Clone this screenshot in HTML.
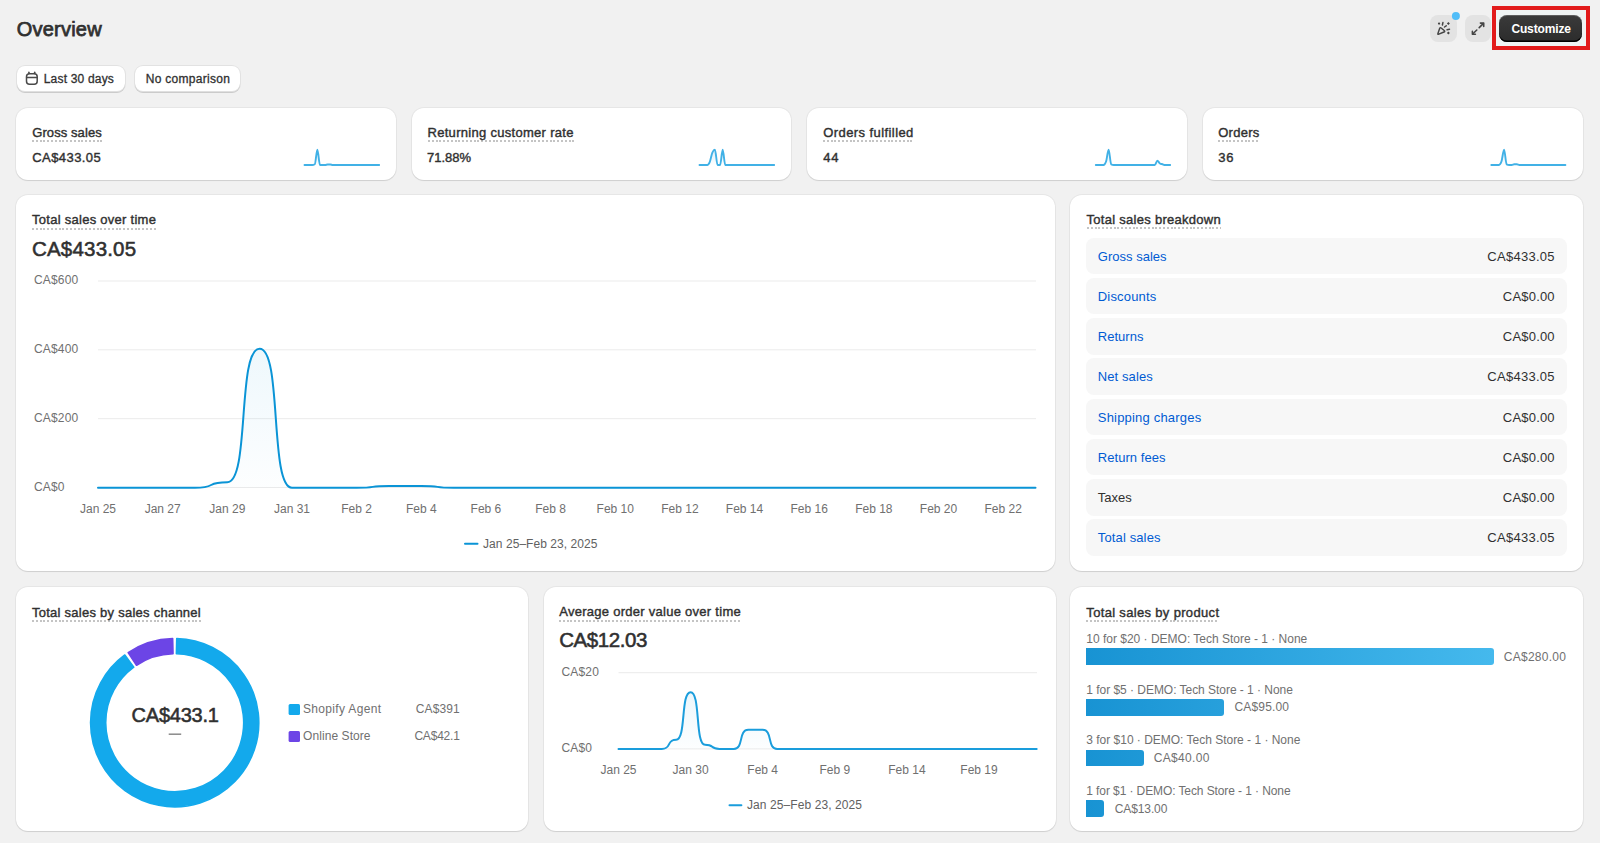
<!DOCTYPE html>
<html><head><meta charset="utf-8"><title>Overview</title>
<style>
html,body{margin:0;padding:0;}
body{width:1600px;height:843px;overflow:hidden;background:#f1f1f1;position:relative;font-family:"Liberation Sans",sans-serif;}
.t{position:absolute;line-height:1;white-space:nowrap;}
.card{position:absolute;background:#fff;border-radius:12px;box-shadow:0 0 0 1px rgba(0,0,0,0.045),0 1px 1px 0 rgba(0,0,0,0.10);}
.btn{position:absolute;background:#fff;border-radius:8px;box-shadow:0 1px 0 0 rgba(0,0,0,0.10),inset 0 -1px 0 0 rgba(0,0,0,0.12),0 0 0 1px rgba(0,0,0,0.06);}
.ibtn{position:absolute;background:#e3e3e3;border-radius:8px;}
.ul{position:absolute;height:2px;background:repeating-linear-gradient(90deg,#c4c4c4 0 2px,transparent 2px 3.8px);}
.row{position:absolute;left:1086px;width:481px;height:36.5px;background:#f7f7f7;border-radius:8px;}
.bar{position:absolute;left:1086px;height:16.5px;border-radius:0 3px 3px 0;background:linear-gradient(90deg,#1893d3 0,#45b9ed 408px);background-size:408px 100%;}
svg{position:absolute;left:0;top:0;}
</style></head><body>
<div class="card" style="left:16px;top:108px;width:380px;height:72.30000000000001px"></div><div class="card" style="left:411.5px;top:108px;width:379.5px;height:72.30000000000001px"></div><div class="card" style="left:807px;top:108px;width:379.79999999999995px;height:72.30000000000001px"></div><div class="card" style="left:1202.6px;top:108px;width:380.0px;height:72.30000000000001px"></div><div class="card" style="left:16px;top:194.5px;width:1039.3px;height:376.9px"></div><div class="card" style="left:1069.8px;top:194.5px;width:512.8px;height:376.9px"></div><div class="card" style="left:16px;top:586.8px;width:512.3px;height:244.70000000000005px"></div><div class="card" style="left:544px;top:586.8px;width:512.2px;height:244.70000000000005px"></div><div class="card" style="left:1069.8px;top:586.8px;width:512.8px;height:244.70000000000005px"></div>
<div class="btn" style="left:16.5px;top:66.2px;width:108.7px;height:25.6px"></div>
<div class="btn" style="left:134.5px;top:66.2px;width:105.9px;height:25.6px"></div>
<div class="ibtn" style="left:1430.4px;top:15px;width:26.5px;height:26.8px"></div>
<div class="ibtn" style="left:1465px;top:15px;width:25.8px;height:26.8px"></div>
<div style="position:absolute;left:1491.8px;top:6.1px;width:90.3px;height:35.5px;border:4px solid #e21b1b;background:#eff3f3"></div>
<div style="position:absolute;left:1499px;top:14.7px;width:83.4px;height:27.3px;border-radius:8px;background:linear-gradient(#3a3a3a,#2c2c2c);box-shadow:inset 0 1px 0 0 rgba(255,255,255,0.18),inset 0 -1.5px 0 0 #000"></div>
<div class="row" style="top:237.50px"></div><div class="row" style="top:277.75px"></div><div class="row" style="top:318.00px"></div><div class="row" style="top:358.25px"></div><div class="row" style="top:398.50px"></div><div class="row" style="top:438.75px"></div><div class="row" style="top:479.00px"></div><div class="row" style="top:519.25px"></div>
<div class="bar" style="top:648.25px;width:407.70px"></div><div class="bar" style="top:699.25px;width:138.30px"></div><div class="bar" style="top:749.80px;width:58.00px"></div><div class="bar" style="top:800.40px;width:18.20px"></div>
<div class="ul" style="left:32.25px;top:140.05px;width:69.50px"></div><div class="ul" style="left:427.50px;top:140.05px;width:146.25px"></div><div class="ul" style="left:823.25px;top:140.05px;width:90.50px"></div><div class="ul" style="left:1218.25px;top:140.05px;width:41.25px"></div><div class="ul" style="left:32.00px;top:227.55px;width:124.25px"></div><div class="ul" style="left:1086.50px;top:227.10px;width:134.50px"></div><div class="ul" style="left:32.00px;top:619.80px;width:169.00px"></div><div class="ul" style="left:559.20px;top:619.70px;width:181.80px"></div><div class="ul" style="left:1086.30px;top:619.80px;width:133.00px"></div>
<svg width="1600" height="843" viewBox="0 0 1600 843">
<defs>
<linearGradient id="sg" x1="0" y1="0" x2="0" y2="1"><stop offset="0" stop-color="#3aaee3" stop-opacity="0.18"/><stop offset="1" stop-color="#3aaee3" stop-opacity="0"/></linearGradient>
<linearGradient id="mg" gradientUnits="userSpaceOnUse" x1="0" y1="347" x2="0" y2="488"><stop offset="0" stop-color="#0a94d6" stop-opacity="0.07"/><stop offset="1" stop-color="#0a94d6" stop-opacity="0.01"/></linearGradient>
<linearGradient id="ag" gradientUnits="userSpaceOnUse" x1="0" y1="692" x2="0" y2="749"><stop offset="0" stop-color="#0a94d6" stop-opacity="0.08"/><stop offset="1" stop-color="#0a94d6" stop-opacity="0.01"/></linearGradient>
</defs>
<path d="M304.50,165.00C305.36,165.00 306.22,165.00 307.08,165.00C307.93,165.00 308.79,165.00 309.65,165.00C310.51,165.00 311.37,165.00 312.23,165.00C313.09,165.00 313.94,164.74 314.80,164.23C315.66,163.72 316.52,149.60 317.38,149.60C318.24,149.60 319.10,165.00 319.96,165.00C320.81,165.00 321.67,165.00 322.53,165.00C323.39,165.00 324.25,165.00 325.11,165.00C325.97,165.00 326.82,164.54 327.68,164.54C328.54,164.54 329.40,164.54 330.26,164.54C331.12,164.54 331.98,165.00 332.83,165.00C333.69,165.00 334.55,165.00 335.41,165.00C336.27,165.00 337.13,165.00 337.99,165.00C338.84,165.00 339.70,165.00 340.56,165.00C341.42,165.00 342.28,165.00 343.14,165.00C344.00,165.00 344.86,165.00 345.71,165.00C346.57,165.00 347.43,165.00 348.29,165.00C349.15,165.00 350.01,165.00 350.87,165.00C351.72,165.00 352.58,165.00 353.44,165.00C354.30,165.00 355.16,165.00 356.02,165.00C356.88,165.00 357.73,165.00 358.59,165.00C359.45,165.00 360.31,165.00 361.17,165.00C362.03,165.00 362.89,165.00 363.74,165.00C364.60,165.00 365.46,165.00 366.32,165.00C367.18,165.00 368.04,165.00 368.90,165.00C369.76,165.00 370.61,165.00 371.47,165.00C372.33,165.00 373.19,165.00 374.05,165.00C374.91,165.00 375.77,165.00 376.62,165.00C377.48,165.00 378.34,165.00 379.20,165.00L379.20,165.5L304.50,165.5Z" fill="url(#sg)"/><path d="M304.50,165.00C305.36,165.00 306.22,165.00 307.08,165.00C307.93,165.00 308.79,165.00 309.65,165.00C310.51,165.00 311.37,165.00 312.23,165.00C313.09,165.00 313.94,164.74 314.80,164.23C315.66,163.72 316.52,149.60 317.38,149.60C318.24,149.60 319.10,165.00 319.96,165.00C320.81,165.00 321.67,165.00 322.53,165.00C323.39,165.00 324.25,165.00 325.11,165.00C325.97,165.00 326.82,164.54 327.68,164.54C328.54,164.54 329.40,164.54 330.26,164.54C331.12,164.54 331.98,165.00 332.83,165.00C333.69,165.00 334.55,165.00 335.41,165.00C336.27,165.00 337.13,165.00 337.99,165.00C338.84,165.00 339.70,165.00 340.56,165.00C341.42,165.00 342.28,165.00 343.14,165.00C344.00,165.00 344.86,165.00 345.71,165.00C346.57,165.00 347.43,165.00 348.29,165.00C349.15,165.00 350.01,165.00 350.87,165.00C351.72,165.00 352.58,165.00 353.44,165.00C354.30,165.00 355.16,165.00 356.02,165.00C356.88,165.00 357.73,165.00 358.59,165.00C359.45,165.00 360.31,165.00 361.17,165.00C362.03,165.00 362.89,165.00 363.74,165.00C364.60,165.00 365.46,165.00 366.32,165.00C367.18,165.00 368.04,165.00 368.90,165.00C369.76,165.00 370.61,165.00 371.47,165.00C372.33,165.00 373.19,165.00 374.05,165.00C374.91,165.00 375.77,165.00 376.62,165.00C377.48,165.00 378.34,165.00 379.20,165.00" fill="none" stroke="#41b1e6" stroke-width="1.9" stroke-linecap="round" stroke-linejoin="round"/><path d="M699.50,165.00C700.36,165.00 701.22,165.00 702.08,165.00C702.93,165.00 703.79,165.00 704.65,165.00C705.51,165.00 706.37,165.00 707.23,165.00C708.09,165.00 708.94,163.84 709.80,161.77C710.66,159.69 711.52,154.48 712.38,152.53C713.24,150.58 714.10,149.60 714.96,149.60C715.81,149.60 716.67,165.00 717.53,165.00C718.39,165.00 719.25,165.00 720.11,165.00C720.97,165.00 721.82,149.60 722.68,149.60C723.54,149.60 724.40,165.00 725.26,165.00C726.12,165.00 726.98,165.00 727.83,165.00C728.69,165.00 729.55,165.00 730.41,165.00C731.27,165.00 732.13,165.00 732.99,165.00C733.84,165.00 734.70,165.00 735.56,165.00C736.42,165.00 737.28,165.00 738.14,165.00C739.00,165.00 739.86,165.00 740.71,165.00C741.57,165.00 742.43,165.00 743.29,165.00C744.15,165.00 745.01,165.00 745.87,165.00C746.72,165.00 747.58,165.00 748.44,165.00C749.30,165.00 750.16,165.00 751.02,165.00C751.88,165.00 752.73,165.00 753.59,165.00C754.45,165.00 755.31,165.00 756.17,165.00C757.03,165.00 757.89,165.00 758.74,165.00C759.60,165.00 760.46,165.00 761.32,165.00C762.18,165.00 763.04,165.00 763.90,165.00C764.76,165.00 765.61,165.00 766.47,165.00C767.33,165.00 768.19,165.00 769.05,165.00C769.91,165.00 770.77,165.00 771.62,165.00C772.48,165.00 773.34,165.00 774.20,165.00L774.20,165.5L699.50,165.5Z" fill="url(#sg)"/><path d="M699.50,165.00C700.36,165.00 701.22,165.00 702.08,165.00C702.93,165.00 703.79,165.00 704.65,165.00C705.51,165.00 706.37,165.00 707.23,165.00C708.09,165.00 708.94,163.84 709.80,161.77C710.66,159.69 711.52,154.48 712.38,152.53C713.24,150.58 714.10,149.60 714.96,149.60C715.81,149.60 716.67,165.00 717.53,165.00C718.39,165.00 719.25,165.00 720.11,165.00C720.97,165.00 721.82,149.60 722.68,149.60C723.54,149.60 724.40,165.00 725.26,165.00C726.12,165.00 726.98,165.00 727.83,165.00C728.69,165.00 729.55,165.00 730.41,165.00C731.27,165.00 732.13,165.00 732.99,165.00C733.84,165.00 734.70,165.00 735.56,165.00C736.42,165.00 737.28,165.00 738.14,165.00C739.00,165.00 739.86,165.00 740.71,165.00C741.57,165.00 742.43,165.00 743.29,165.00C744.15,165.00 745.01,165.00 745.87,165.00C746.72,165.00 747.58,165.00 748.44,165.00C749.30,165.00 750.16,165.00 751.02,165.00C751.88,165.00 752.73,165.00 753.59,165.00C754.45,165.00 755.31,165.00 756.17,165.00C757.03,165.00 757.89,165.00 758.74,165.00C759.60,165.00 760.46,165.00 761.32,165.00C762.18,165.00 763.04,165.00 763.90,165.00C764.76,165.00 765.61,165.00 766.47,165.00C767.33,165.00 768.19,165.00 769.05,165.00C769.91,165.00 770.77,165.00 771.62,165.00C772.48,165.00 773.34,165.00 774.20,165.00" fill="none" stroke="#41b1e6" stroke-width="1.9" stroke-linecap="round" stroke-linejoin="round"/><path d="M1095.80,165.00C1096.66,165.00 1097.51,165.00 1098.37,165.00C1099.22,165.00 1100.08,165.00 1100.93,165.00C1101.79,165.00 1102.64,165.00 1103.50,165.00C1104.35,165.00 1105.21,163.82 1106.06,161.46C1106.92,159.10 1107.77,149.60 1108.63,149.60C1109.48,149.60 1110.34,163.97 1111.19,164.38C1112.05,164.79 1112.90,165.00 1113.76,165.00C1114.61,165.00 1115.47,165.00 1116.32,165.00C1117.18,165.00 1118.03,165.00 1118.89,165.00C1119.74,165.00 1120.60,165.00 1121.46,165.00C1122.31,165.00 1123.17,165.00 1124.02,165.00C1124.88,165.00 1125.73,165.00 1126.59,165.00C1127.44,165.00 1128.30,165.00 1129.15,165.00C1130.01,165.00 1130.86,165.00 1131.72,165.00C1132.57,165.00 1133.43,165.00 1134.28,165.00C1135.14,165.00 1135.99,165.00 1136.85,165.00C1137.70,165.00 1138.56,165.00 1139.41,165.00C1140.27,165.00 1141.12,165.00 1141.98,165.00C1142.83,165.00 1143.69,165.00 1144.54,165.00C1145.40,165.00 1146.26,165.00 1147.11,165.00C1147.97,165.00 1148.82,165.00 1149.68,165.00C1150.53,165.00 1151.39,165.00 1152.24,165.00C1153.10,165.00 1153.95,165.00 1154.81,165.00C1155.66,165.00 1156.52,160.69 1157.37,160.69C1158.23,160.69 1159.08,162.95 1159.94,163.46C1160.79,163.97 1161.65,163.97 1162.50,164.23C1163.36,164.49 1164.21,165.00 1165.07,165.00C1165.92,165.00 1166.78,165.00 1167.63,165.00C1168.49,165.00 1169.34,165.00 1170.20,165.00L1170.20,165.5L1095.80,165.5Z" fill="url(#sg)"/><path d="M1095.80,165.00C1096.66,165.00 1097.51,165.00 1098.37,165.00C1099.22,165.00 1100.08,165.00 1100.93,165.00C1101.79,165.00 1102.64,165.00 1103.50,165.00C1104.35,165.00 1105.21,163.82 1106.06,161.46C1106.92,159.10 1107.77,149.60 1108.63,149.60C1109.48,149.60 1110.34,163.97 1111.19,164.38C1112.05,164.79 1112.90,165.00 1113.76,165.00C1114.61,165.00 1115.47,165.00 1116.32,165.00C1117.18,165.00 1118.03,165.00 1118.89,165.00C1119.74,165.00 1120.60,165.00 1121.46,165.00C1122.31,165.00 1123.17,165.00 1124.02,165.00C1124.88,165.00 1125.73,165.00 1126.59,165.00C1127.44,165.00 1128.30,165.00 1129.15,165.00C1130.01,165.00 1130.86,165.00 1131.72,165.00C1132.57,165.00 1133.43,165.00 1134.28,165.00C1135.14,165.00 1135.99,165.00 1136.85,165.00C1137.70,165.00 1138.56,165.00 1139.41,165.00C1140.27,165.00 1141.12,165.00 1141.98,165.00C1142.83,165.00 1143.69,165.00 1144.54,165.00C1145.40,165.00 1146.26,165.00 1147.11,165.00C1147.97,165.00 1148.82,165.00 1149.68,165.00C1150.53,165.00 1151.39,165.00 1152.24,165.00C1153.10,165.00 1153.95,165.00 1154.81,165.00C1155.66,165.00 1156.52,160.69 1157.37,160.69C1158.23,160.69 1159.08,162.95 1159.94,163.46C1160.79,163.97 1161.65,163.97 1162.50,164.23C1163.36,164.49 1164.21,165.00 1165.07,165.00C1165.92,165.00 1166.78,165.00 1167.63,165.00C1168.49,165.00 1169.34,165.00 1170.20,165.00" fill="none" stroke="#41b1e6" stroke-width="1.9" stroke-linecap="round" stroke-linejoin="round"/><path d="M1491.30,165.00C1492.15,165.00 1493.00,165.00 1493.86,165.00C1494.71,165.00 1495.56,165.00 1496.41,165.00C1497.26,165.00 1498.11,165.00 1498.97,165.00C1499.82,165.00 1500.67,163.77 1501.52,161.30C1502.37,158.84 1503.22,149.60 1504.08,149.60C1504.93,149.60 1505.78,163.97 1506.63,164.38C1507.48,164.79 1508.33,165.00 1509.19,165.00C1510.04,165.00 1510.89,165.00 1511.74,165.00C1512.59,165.00 1513.44,164.23 1514.30,164.23C1515.15,164.23 1516.00,164.23 1516.85,164.23C1517.70,164.23 1518.56,165.00 1519.41,165.00C1520.26,165.00 1521.11,165.00 1521.96,165.00C1522.81,165.00 1523.67,165.00 1524.52,165.00C1525.37,165.00 1526.22,165.00 1527.07,165.00C1527.92,165.00 1528.78,165.00 1529.63,165.00C1530.48,165.00 1531.33,165.00 1532.18,165.00C1533.03,165.00 1533.89,165.00 1534.74,165.00C1535.59,165.00 1536.44,165.00 1537.29,165.00C1538.14,165.00 1539.00,165.00 1539.85,165.00C1540.70,165.00 1541.55,165.00 1542.40,165.00C1543.26,165.00 1544.11,165.00 1544.96,165.00C1545.81,165.00 1546.66,165.00 1547.51,165.00C1548.37,165.00 1549.22,165.00 1550.07,165.00C1550.92,165.00 1551.77,165.00 1552.62,165.00C1553.48,165.00 1554.33,165.00 1555.18,165.00C1556.03,165.00 1556.88,165.00 1557.73,165.00C1558.59,165.00 1559.44,165.00 1560.29,165.00C1561.14,165.00 1561.99,165.00 1562.84,165.00C1563.70,165.00 1564.55,165.00 1565.40,165.00L1565.40,165.5L1491.30,165.5Z" fill="url(#sg)"/><path d="M1491.30,165.00C1492.15,165.00 1493.00,165.00 1493.86,165.00C1494.71,165.00 1495.56,165.00 1496.41,165.00C1497.26,165.00 1498.11,165.00 1498.97,165.00C1499.82,165.00 1500.67,163.77 1501.52,161.30C1502.37,158.84 1503.22,149.60 1504.08,149.60C1504.93,149.60 1505.78,163.97 1506.63,164.38C1507.48,164.79 1508.33,165.00 1509.19,165.00C1510.04,165.00 1510.89,165.00 1511.74,165.00C1512.59,165.00 1513.44,164.23 1514.30,164.23C1515.15,164.23 1516.00,164.23 1516.85,164.23C1517.70,164.23 1518.56,165.00 1519.41,165.00C1520.26,165.00 1521.11,165.00 1521.96,165.00C1522.81,165.00 1523.67,165.00 1524.52,165.00C1525.37,165.00 1526.22,165.00 1527.07,165.00C1527.92,165.00 1528.78,165.00 1529.63,165.00C1530.48,165.00 1531.33,165.00 1532.18,165.00C1533.03,165.00 1533.89,165.00 1534.74,165.00C1535.59,165.00 1536.44,165.00 1537.29,165.00C1538.14,165.00 1539.00,165.00 1539.85,165.00C1540.70,165.00 1541.55,165.00 1542.40,165.00C1543.26,165.00 1544.11,165.00 1544.96,165.00C1545.81,165.00 1546.66,165.00 1547.51,165.00C1548.37,165.00 1549.22,165.00 1550.07,165.00C1550.92,165.00 1551.77,165.00 1552.62,165.00C1553.48,165.00 1554.33,165.00 1555.18,165.00C1556.03,165.00 1556.88,165.00 1557.73,165.00C1558.59,165.00 1559.44,165.00 1560.29,165.00C1561.14,165.00 1561.99,165.00 1562.84,165.00C1563.70,165.00 1564.55,165.00 1565.40,165.00" fill="none" stroke="#41b1e6" stroke-width="1.9" stroke-linecap="round" stroke-linejoin="round"/>
<line x1="98" x2="1036" y1="281.00" y2="281.00" stroke="#ebebeb" stroke-width="1"/><line x1="98" x2="1036" y1="349.83" y2="349.83" stroke="#ebebeb" stroke-width="1"/><line x1="98" x2="1036" y1="418.66" y2="418.66" stroke="#ebebeb" stroke-width="1"/><line x1="98" x2="1036" y1="487.49" y2="487.49" stroke="#ebebeb" stroke-width="1"/><path d="M98.00,487.75C120.63,487.75 107.70,487.75 130.33,487.75C152.96,487.75 140.03,487.75 162.66,487.75C185.28,487.75 172.35,487.75 194.98,487.75C217.61,487.75 204.68,482.24 227.31,482.24C249.94,482.24 237.01,348.71 259.64,348.71C282.27,348.71 269.34,487.75 291.97,487.75C314.59,487.75 301.66,487.75 324.29,487.75C346.92,487.75 333.99,487.75 356.62,487.75C379.25,487.75 366.32,486.03 388.95,486.03C411.58,486.03 398.65,486.03 421.28,486.03C443.91,486.03 430.97,487.75 453.60,487.75C476.23,487.75 463.30,487.75 485.93,487.75C508.56,487.75 495.63,487.75 518.26,487.75C540.89,487.75 527.96,487.75 550.59,487.75C573.22,487.75 560.28,487.75 582.91,487.75C605.54,487.75 592.61,487.75 615.24,487.75C637.87,487.75 624.94,487.75 647.57,487.75C670.20,487.75 657.27,487.75 679.90,487.75C702.53,487.75 689.59,487.75 712.22,487.75C734.85,487.75 721.92,487.75 744.55,487.75C767.18,487.75 754.25,487.75 776.88,487.75C799.51,487.75 786.58,487.75 809.21,487.75C831.84,487.75 818.91,487.75 841.53,487.75C864.16,487.75 851.23,487.75 873.86,487.75C896.49,487.75 883.56,487.75 906.19,487.75C928.82,487.75 915.89,487.75 938.52,487.75C961.15,487.75 948.22,487.75 970.84,487.75C993.47,487.75 980.54,487.75 1003.17,487.75C1025.80,487.75 1012.87,487.75 1035.50,487.75L1035.50,487.75L98.00,487.75Z" fill="url(#mg)"/><path d="M98.00,487.75C120.63,487.75 107.70,487.75 130.33,487.75C152.96,487.75 140.03,487.75 162.66,487.75C185.28,487.75 172.35,487.75 194.98,487.75C217.61,487.75 204.68,482.24 227.31,482.24C249.94,482.24 237.01,348.71 259.64,348.71C282.27,348.71 269.34,487.75 291.97,487.75C314.59,487.75 301.66,487.75 324.29,487.75C346.92,487.75 333.99,487.75 356.62,487.75C379.25,487.75 366.32,486.03 388.95,486.03C411.58,486.03 398.65,486.03 421.28,486.03C443.91,486.03 430.97,487.75 453.60,487.75C476.23,487.75 463.30,487.75 485.93,487.75C508.56,487.75 495.63,487.75 518.26,487.75C540.89,487.75 527.96,487.75 550.59,487.75C573.22,487.75 560.28,487.75 582.91,487.75C605.54,487.75 592.61,487.75 615.24,487.75C637.87,487.75 624.94,487.75 647.57,487.75C670.20,487.75 657.27,487.75 679.90,487.75C702.53,487.75 689.59,487.75 712.22,487.75C734.85,487.75 721.92,487.75 744.55,487.75C767.18,487.75 754.25,487.75 776.88,487.75C799.51,487.75 786.58,487.75 809.21,487.75C831.84,487.75 818.91,487.75 841.53,487.75C864.16,487.75 851.23,487.75 873.86,487.75C896.49,487.75 883.56,487.75 906.19,487.75C928.82,487.75 915.89,487.75 938.52,487.75C961.15,487.75 948.22,487.75 970.84,487.75C993.47,487.75 980.54,487.75 1003.17,487.75C1025.80,487.75 1012.87,487.75 1035.50,487.75" fill="none" stroke="#0a94d6" stroke-width="2" stroke-linecap="round"/>
<line x1="465" x2="477.5" y1="543.75" y2="543.75" stroke="#0a94d6" stroke-width="2" stroke-linecap="round"/>
<line x1="618.5" x2="1037" y1="672.7" y2="672.7" stroke="#ebebeb"/><line x1="618.5" x2="1037" y1="748.9" y2="748.9" stroke="#ebebeb"/><path d="M618.50,748.90C628.59,748.90 622.83,748.90 632.92,748.90C643.01,748.90 637.25,748.90 647.34,748.90C657.43,748.90 651.67,748.90 661.76,748.90C671.85,748.90 666.09,739.76 676.18,739.76C686.27,739.76 680.51,692.13 690.60,692.13C700.69,692.13 694.93,744.71 705.02,744.71C715.11,744.71 709.35,748.90 719.44,748.90C729.53,748.90 723.77,748.90 733.86,748.90C743.95,748.90 738.19,729.85 748.28,729.85C758.37,729.85 752.61,729.85 762.70,729.85C772.79,729.85 767.03,748.90 777.12,748.90C787.21,748.90 781.45,748.90 791.54,748.90C801.63,748.90 795.87,748.90 805.96,748.90C816.05,748.90 810.29,748.90 820.38,748.90C830.47,748.90 824.71,748.90 834.80,748.90C844.89,748.90 839.13,748.90 849.22,748.90C859.31,748.90 853.55,748.90 863.64,748.90C873.73,748.90 867.97,748.90 878.06,748.90C888.15,748.90 882.39,748.90 892.48,748.90C902.57,748.90 896.81,748.90 906.90,748.90C916.99,748.90 911.23,748.90 921.32,748.90C931.41,748.90 925.65,748.90 935.74,748.90C945.83,748.90 940.07,748.90 950.16,748.90C960.25,748.90 954.49,748.90 964.58,748.90C974.67,748.90 968.91,748.90 979.00,748.90C989.09,748.90 983.33,748.90 993.42,748.90C1003.51,748.90 997.75,748.90 1007.84,748.90C1017.93,748.90 1012.17,748.90 1022.26,748.90C1032.35,748.90 1026.59,748.90 1036.68,748.90L1036.68,748.90L618.50,748.90Z" fill="url(#ag)"/><path d="M618.50,748.90C628.59,748.90 622.83,748.90 632.92,748.90C643.01,748.90 637.25,748.90 647.34,748.90C657.43,748.90 651.67,748.90 661.76,748.90C671.85,748.90 666.09,739.76 676.18,739.76C686.27,739.76 680.51,692.13 690.60,692.13C700.69,692.13 694.93,744.71 705.02,744.71C715.11,744.71 709.35,748.90 719.44,748.90C729.53,748.90 723.77,748.90 733.86,748.90C743.95,748.90 738.19,729.85 748.28,729.85C758.37,729.85 752.61,729.85 762.70,729.85C772.79,729.85 767.03,748.90 777.12,748.90C787.21,748.90 781.45,748.90 791.54,748.90C801.63,748.90 795.87,748.90 805.96,748.90C816.05,748.90 810.29,748.90 820.38,748.90C830.47,748.90 824.71,748.90 834.80,748.90C844.89,748.90 839.13,748.90 849.22,748.90C859.31,748.90 853.55,748.90 863.64,748.90C873.73,748.90 867.97,748.90 878.06,748.90C888.15,748.90 882.39,748.90 892.48,748.90C902.57,748.90 896.81,748.90 906.90,748.90C916.99,748.90 911.23,748.90 921.32,748.90C931.41,748.90 925.65,748.90 935.74,748.90C945.83,748.90 940.07,748.90 950.16,748.90C960.25,748.90 954.49,748.90 964.58,748.90C974.67,748.90 968.91,748.90 979.00,748.90C989.09,748.90 983.33,748.90 993.42,748.90C1003.51,748.90 997.75,748.90 1007.84,748.90C1017.93,748.90 1012.17,748.90 1022.26,748.90C1032.35,748.90 1026.59,748.90 1036.68,748.90" fill="none" stroke="#1a9ddc" stroke-width="2" stroke-linecap="round"/>
<line x1="729.5" x2="741.4" y1="805.2" y2="805.2" stroke="#1a9ddc" stroke-width="2" stroke-linecap="round"/>
<path d="M176.75,638.63A84.1,84.1 0 1 1 124.80,655.00L133.76,667.16A69.0,69.0 0 1 0 176.39,653.72Z" fill="#13a9ec" stroke="#13a9ec" stroke-width="1.6" stroke-linejoin="round"/><path d="M128.17,652.65A84.1,84.1 0 0 1 172.65,638.63L173.01,653.72A69.0,69.0 0 0 0 136.52,665.22Z" fill="#6c45e6" stroke="#6c45e6" stroke-width="1.6" stroke-linejoin="round"/>
<line x1="168.7" x2="181.2" y1="734.2" y2="734.2" stroke="#8a8a8a" stroke-width="1.5"/>
<rect x="288.6" y="703.9" width="11.4" height="11.1" rx="1.5" fill="#13a9ec"/>
<rect x="288.6" y="730.9" width="11.4" height="11.1" rx="1.5" fill="#6c45e6"/>
<!-- calendar icon -->
<g fill="none" stroke="#4a4a4a" stroke-width="1.5" stroke-linecap="round">
<rect x="26.5" y="73.7" width="10.7" height="10.6" rx="3"/>
<line x1="26.6" y1="77.6" x2="37.1" y2="77.6"/>
<line x1="28.9" y1="72.3" x2="28.9" y2="73.6"/><line x1="34.7" y1="72.3" x2="34.7" y2="73.6"/>
</g>
<!-- party icon -->
<g fill="none" stroke="#454545" stroke-width="1.5" stroke-linecap="round" stroke-linejoin="round">
<path d="M1439.65,28.42Q1440.10,27.10 1441.18,27.99L1444.22,30.51Q1445.30,31.40 1444.01,31.95L1438.79,34.15Q1437.50,34.70 1437.95,33.38Z" stroke-width="1.5"/>
<line x1="1442.9" y1="22.6" x2="1442.4" y2="25.0"/>
<line x1="1444.5" y1="27.0" x2="1446.2" y2="25.8"/>
<line x1="1447.1" y1="29.8" x2="1449.5" y2="29.2"/>
</g>
<g fill="#454545">
<circle cx="1439.05" cy="23.6" r="1.15"/>
<path d="M1448.4,22.1 L1449.9,23.6 L1448.4,25.1 L1446.9,23.6Z"/>
<path d="M1448.4,31.6 L1449.9,33.1 L1448.4,34.6 L1446.9,33.1Z"/>
</g>
<!-- expand icon -->
<g fill="none" stroke="#454545" stroke-width="1.6" stroke-linecap="round" stroke-linejoin="round">
<line x1="1483.2" y1="23.6" x2="1479.2" y2="27.6"/><line x1="1472.9" y1="33.8" x2="1476.8" y2="30.0"/>
<path d="M1480.4,23.1 L1483.7,23.1 L1483.7,26.4"/><path d="M1472.4,31.4 L1472.4,34.3 L1475.4,34.3"/>
</g>
<circle cx="1455.9" cy="16" r="4" fill="#51bdf8"/>
</svg>
<div class="t" style="top:18.80px;font-size:20px;color:#303030;-webkit-text-stroke:0.75px #303030;letter-spacing:0.212px;left:16.75px;">Overview</div>
<div class="t" style="top:73.00px;font-size:12px;color:#303030;-webkit-text-stroke:0.3px #303030;letter-spacing:0.184px;left:43.75px;">Last 30 days</div>
<div class="t" style="top:73.00px;font-size:12px;color:#303030;-webkit-text-stroke:0.3px #303030;letter-spacing:0.284px;left:145.75px;">No comparison</div>
<div class="t" style="top:23.10px;font-size:12px;font-weight:700;color:#ffffff;letter-spacing:-0.133px;left:1511.40px;">Customize</div>
<div class="t" style="top:125.75px;font-size:13px;color:#303030;-webkit-text-stroke:0.4px #303030;letter-spacing:0.082px;left:32.25px;">Gross sales</div>
<div class="t" style="top:125.75px;font-size:13px;color:#303030;-webkit-text-stroke:0.4px #303030;letter-spacing:0.295px;left:427.50px;">Returning customer rate</div>
<div class="t" style="top:125.75px;font-size:13px;color:#303030;-webkit-text-stroke:0.4px #303030;letter-spacing:0.419px;left:823.25px;">Orders fulfilled</div>
<div class="t" style="top:125.75px;font-size:13px;color:#303030;-webkit-text-stroke:0.4px #303030;letter-spacing:0.250px;left:1218.25px;">Orders</div>
<div class="t" style="top:151.00px;font-size:13px;color:#303030;-webkit-text-stroke:0.4px #303030;letter-spacing:0.433px;left:32.25px;">CA$433.05</div>
<div class="t" style="top:151.00px;font-size:13px;color:#303030;-webkit-text-stroke:0.4px #303030;letter-spacing:0.017px;left:427.00px;">71.88%</div>
<div class="t" style="top:151.00px;font-size:13px;color:#303030;-webkit-text-stroke:0.4px #303030;letter-spacing:0.750px;left:823.25px;">44</div>
<div class="t" style="top:151.00px;font-size:13px;color:#303030;-webkit-text-stroke:0.4px #303030;letter-spacing:0.750px;left:1218.25px;">36</div>
<div class="t" style="top:213.25px;font-size:13px;color:#303030;-webkit-text-stroke:0.4px #303030;letter-spacing:0.272px;left:32.00px;">Total sales over time</div>
<div class="t" style="top:238.50px;font-size:20.5px;color:#303030;-webkit-text-stroke:0.55px #303030;letter-spacing:0.189px;left:32.00px;">CA$433.05</div>
<div class="t" style="top:274.25px;font-size:12px;font-weight:400;color:#707070;letter-spacing:0.167px;left:34.00px;">CA$600</div>
<div class="t" style="top:343.08px;font-size:12px;font-weight:400;color:#707070;letter-spacing:0.167px;left:34.00px;">CA$400</div>
<div class="t" style="top:411.91px;font-size:12px;font-weight:400;color:#707070;letter-spacing:0.167px;left:34.00px;">CA$200</div>
<div class="t" style="top:480.74px;font-size:12px;font-weight:400;color:#707070;letter-spacing:0.125px;left:34.00px;">CA$0</div>
<div class="t" style="top:503.25px;font-size:12px;font-weight:400;color:#707070;left:-52.00px;width:300px;text-align:center;">Jan 25</div>
<div class="t" style="top:503.25px;font-size:12px;font-weight:400;color:#707070;left:12.66px;width:300px;text-align:center;">Jan 27</div>
<div class="t" style="top:503.25px;font-size:12px;font-weight:400;color:#707070;left:77.31px;width:300px;text-align:center;">Jan 29</div>
<div class="t" style="top:503.25px;font-size:12px;font-weight:400;color:#707070;left:141.97px;width:300px;text-align:center;">Jan 31</div>
<div class="t" style="top:503.25px;font-size:12px;font-weight:400;color:#707070;left:206.62px;width:300px;text-align:center;">Feb 2</div>
<div class="t" style="top:503.25px;font-size:12px;font-weight:400;color:#707070;left:271.28px;width:300px;text-align:center;">Feb 4</div>
<div class="t" style="top:503.25px;font-size:12px;font-weight:400;color:#707070;left:335.93px;width:300px;text-align:center;">Feb 6</div>
<div class="t" style="top:503.25px;font-size:12px;font-weight:400;color:#707070;left:400.59px;width:300px;text-align:center;">Feb 8</div>
<div class="t" style="top:503.25px;font-size:12px;font-weight:400;color:#707070;left:465.24px;width:300px;text-align:center;">Feb 10</div>
<div class="t" style="top:503.25px;font-size:12px;font-weight:400;color:#707070;left:529.90px;width:300px;text-align:center;">Feb 12</div>
<div class="t" style="top:503.25px;font-size:12px;font-weight:400;color:#707070;left:594.55px;width:300px;text-align:center;">Feb 14</div>
<div class="t" style="top:503.25px;font-size:12px;font-weight:400;color:#707070;left:659.21px;width:300px;text-align:center;">Feb 16</div>
<div class="t" style="top:503.25px;font-size:12px;font-weight:400;color:#707070;left:723.86px;width:300px;text-align:center;">Feb 18</div>
<div class="t" style="top:503.25px;font-size:12px;font-weight:400;color:#707070;left:788.52px;width:300px;text-align:center;">Feb 20</div>
<div class="t" style="top:503.25px;font-size:12px;font-weight:400;color:#707070;left:853.17px;width:300px;text-align:center;">Feb 22</div>
<div class="t" style="top:538.25px;font-size:12px;font-weight:400;color:#616161;letter-spacing:0.058px;left:483.00px;">Jan 25–Feb 23, 2025</div>
<div class="t" style="top:212.80px;font-size:13px;color:#303030;-webkit-text-stroke:0.4px #303030;letter-spacing:0.281px;left:1086.50px;">Total sales breakdown</div>
<div class="t" style="top:249.70px;font-size:13px;font-weight:400;color:#005bd3;letter-spacing:0.018px;left:1097.80px;">Gross sales</div>
<div class="t" style="top:249.70px;font-size:13px;font-weight:400;color:#303030;letter-spacing:0.267px;right:45.20px;">CA$433.05</div>
<div class="t" style="top:289.95px;font-size:13px;font-weight:400;color:#005bd3;letter-spacing:0.178px;left:1097.80px;">Discounts</div>
<div class="t" style="top:289.95px;font-size:13px;font-weight:400;color:#303030;letter-spacing:0.200px;right:45.20px;">CA$0.00</div>
<div class="t" style="top:330.20px;font-size:13px;font-weight:400;color:#005bd3;letter-spacing:0.014px;left:1097.80px;">Returns</div>
<div class="t" style="top:330.20px;font-size:13px;font-weight:400;color:#303030;letter-spacing:0.200px;right:45.20px;">CA$0.00</div>
<div class="t" style="top:370.45px;font-size:13px;font-weight:400;color:#005bd3;letter-spacing:0.089px;left:1097.80px;">Net sales</div>
<div class="t" style="top:370.45px;font-size:13px;font-weight:400;color:#303030;letter-spacing:0.267px;right:45.20px;">CA$433.05</div>
<div class="t" style="top:410.70px;font-size:13px;font-weight:400;color:#005bd3;letter-spacing:0.194px;left:1097.80px;">Shipping charges</div>
<div class="t" style="top:410.70px;font-size:13px;font-weight:400;color:#303030;letter-spacing:0.200px;right:45.20px;">CA$0.00</div>
<div class="t" style="top:450.95px;font-size:13px;font-weight:400;color:#005bd3;letter-spacing:0.055px;left:1097.80px;">Return fees</div>
<div class="t" style="top:450.95px;font-size:13px;font-weight:400;color:#303030;letter-spacing:0.200px;right:45.20px;">CA$0.00</div>
<div class="t" style="top:491.20px;font-size:13px;font-weight:400;color:#303030;letter-spacing:0.020px;left:1097.80px;">Taxes</div>
<div class="t" style="top:491.20px;font-size:13px;font-weight:400;color:#303030;letter-spacing:0.200px;right:45.20px;">CA$0.00</div>
<div class="t" style="top:531.45px;font-size:13px;font-weight:400;color:#005bd3;letter-spacing:0.127px;left:1097.80px;">Total sales</div>
<div class="t" style="top:531.45px;font-size:13px;font-weight:400;color:#303030;letter-spacing:0.267px;right:45.20px;">CA$433.05</div>
<div class="t" style="top:605.50px;font-size:13px;color:#303030;-webkit-text-stroke:0.4px #303030;letter-spacing:0.254px;left:32.00px;">Total sales by sales channel</div>
<div class="t" style="top:704.70px;font-size:20px;color:#303030;-webkit-text-stroke:0.55px #303030;letter-spacing:-0.238px;left:25.15px;width:300px;text-align:center;">CA$433.1</div>
<div class="t" style="top:703.30px;font-size:12px;font-weight:400;color:#707070;letter-spacing:0.331px;left:303.00px;">Shopify Agent</div>
<div class="t" style="top:703.30px;font-size:12px;font-weight:400;color:#707070;letter-spacing:0.083px;left:415.80px;">CA$391</div>
<div class="t" style="top:730.30px;font-size:12px;font-weight:400;color:#707070;letter-spacing:0.075px;left:303.00px;">Online Store</div>
<div class="t" style="top:730.30px;font-size:12px;font-weight:400;color:#707070;letter-spacing:-0.200px;left:414.40px;">CA$42.1</div>
<div class="t" style="top:605.40px;font-size:13px;color:#303030;-webkit-text-stroke:0.4px #303030;letter-spacing:0.272px;left:559.20px;">Average order value over time</div>
<div class="t" style="top:630.15px;font-size:20.5px;color:#303030;-webkit-text-stroke:0.55px #303030;letter-spacing:-0.425px;left:559.20px;">CA$12.03</div>
<div class="t" style="top:666.00px;font-size:12px;font-weight:400;color:#707070;letter-spacing:0.160px;left:561.50px;">CA$20</div>
<div class="t" style="top:742.20px;font-size:12px;font-weight:400;color:#707070;letter-spacing:0.125px;left:561.50px;">CA$0</div>
<div class="t" style="top:763.80px;font-size:12px;font-weight:400;color:#707070;left:468.50px;width:300px;text-align:center;">Jan 25</div>
<div class="t" style="top:763.80px;font-size:12px;font-weight:400;color:#707070;left:540.60px;width:300px;text-align:center;">Jan 30</div>
<div class="t" style="top:763.80px;font-size:12px;font-weight:400;color:#707070;left:612.70px;width:300px;text-align:center;">Feb 4</div>
<div class="t" style="top:763.80px;font-size:12px;font-weight:400;color:#707070;left:684.80px;width:300px;text-align:center;">Feb 9</div>
<div class="t" style="top:763.80px;font-size:12px;font-weight:400;color:#707070;left:756.90px;width:300px;text-align:center;">Feb 14</div>
<div class="t" style="top:763.80px;font-size:12px;font-weight:400;color:#707070;left:829.00px;width:300px;text-align:center;">Feb 19</div>
<div class="t" style="top:799.20px;font-size:12px;font-weight:400;color:#616161;letter-spacing:0.084px;left:747.00px;">Jan 25–Feb 23, 2025</div>
<div class="t" style="top:605.50px;font-size:13px;color:#303030;-webkit-text-stroke:0.4px #303030;letter-spacing:0.332px;left:1086.30px;">Total sales by product</div>
<div class="t" style="top:633.00px;font-size:12px;font-weight:400;color:#707070;letter-spacing:-0.007px;left:1086.30px;">10 for $20 · DEMO: Tech Store - 1 · None</div>
<div class="t" style="top:651.00px;font-size:12px;font-weight:400;color:#707070;letter-spacing:0.256px;left:1503.80px;">CA$280.00</div>
<div class="t" style="top:684.00px;font-size:12px;font-weight:400;color:#707070;letter-spacing:-0.034px;left:1086.30px;">1 for $5 · DEMO: Tech Store - 1 · None</div>
<div class="t" style="top:701.25px;font-size:12px;font-weight:400;color:#707070;letter-spacing:0.163px;left:1234.50px;">CA$95.00</div>
<div class="t" style="top:734.40px;font-size:12px;font-weight:400;color:#707070;letter-spacing:-0.013px;left:1086.30px;">3 for $10 · DEMO: Tech Store - 1 · None</div>
<div class="t" style="top:752.20px;font-size:12px;font-weight:400;color:#707070;letter-spacing:0.325px;left:1153.80px;">CA$40.00</div>
<div class="t" style="top:785.30px;font-size:12px;font-weight:400;color:#707070;letter-spacing:-0.097px;left:1086.30px;">1 for $1 · DEMO: Tech Store - 1 · None</div>
<div class="t" style="top:802.90px;font-size:12px;font-weight:400;color:#707070;letter-spacing:-0.100px;left:1114.70px;">CA$13.00</div>
</body></html>
